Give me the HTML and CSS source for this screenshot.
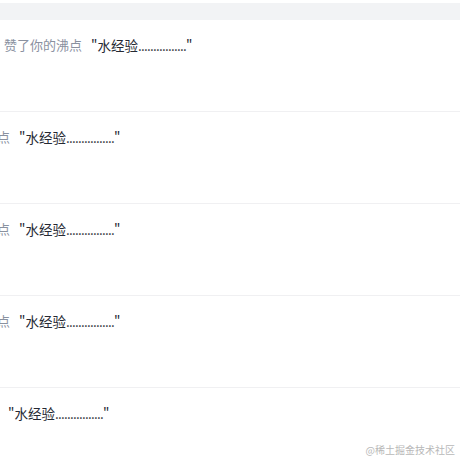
FILE: index.html
```html
<!DOCTYPE html>
<html lang="zh-CN">
<head>
  <meta charset="UTF-8" />
  <meta name="viewport" content="width=device-width, initial-scale=1.0" />
  <title>消息通知</title>
  <link rel="stylesheet" href="styles.css">
</head>
<body>

<div class="page">
  <div class="top-band"></div>

  <ul class="notice-list">
    <li class="notice">
      <div class="notice-line">
        <span class="action">赞了你的沸点</span>
        <span class="quote">"水经验<span class="dots">................</span>"</span>
      </div>
    </li>
    <li class="notice">
      <div class="notice-line shift-md">
        <span class="action">赞了你的沸点</span>
        <span class="quote">"水经验<span class="dots">................</span>"</span>
      </div>
    </li>
    <li class="notice">
      <div class="notice-line shift-md">
        <span class="action">赞了你的沸点</span>
        <span class="quote">"水经验<span class="dots">................</span>"</span>
      </div>
    </li>
    <li class="notice">
      <div class="notice-line shift-md">
        <span class="action">赞了你的沸点</span>
        <span class="quote">"水经验<span class="dots">................</span>"</span>
      </div>
    </li>
    <li class="notice">
      <div class="notice-line shift-lg">
        <span class="action">赞了你的沸点</span>
        <span class="quote">"水经验<span class="dots">................</span>"</span>
      </div>
    </li>
  </ul>

  <div class="watermark">@稀土掘金技术社区</div>
</div>

</body>
</html>
```

FILE: styles.css
```css
* {
  box-sizing: border-box;
}

body {
  margin: 0;
  padding: 0;
  background: #ffffff;
  font-family: "Noto Sans CJK SC", "Microsoft YaHei", sans-serif;
  color: #252933;
  overflow: hidden;
}

.page {
  width: 460px;
  height: 460px;
  position: relative;
  overflow: hidden;
  padding-top: 3px;
}

.top-band {
  height: 17px;
  background: #f2f3f5;
}

.notice-list {
  list-style: none;
  margin: 0;
  padding: 0;
}

.notice {
  height: 92px;
  border-bottom: 1px solid #f0f0f2;
  padding-top: 14px;
  overflow: hidden;
}

.notice-line {
  display: flex;
  align-items: center;
  gap: 9px;
  margin-left: 4px;
  font-size: 13px;
  line-height: 22px;
  white-space: nowrap;
}

.notice-line.shift-md {
  margin-left: -68px;
}

.notice-line.shift-lg {
  margin-left: -79px;
}

.action {
  color: #8a919f;
}

.quote {
  color: #252933;
  font-size: 13.5px;
}

.dots {
  letter-spacing: -0.75px;
}

.watermark {
  position: absolute;
  right: 5px;
  bottom: 3px;
  font-size: 10px;
  color: #b8b8b8;
  font-family: "Noto Sans CJK SC", serif;
}
```
